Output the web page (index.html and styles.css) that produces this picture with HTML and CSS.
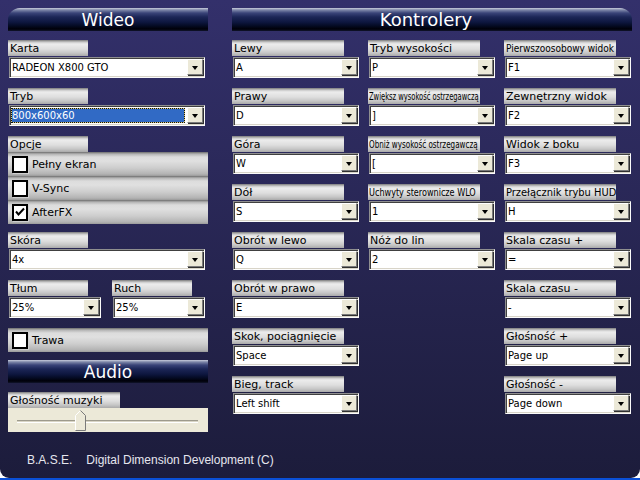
FILE: index.html
```html
<!DOCTYPE html>
<html>
<head>
<meta charset="utf-8">
<link rel="stylesheet" href="styles.css">
</head>
<body>
<div class="window">
  <div class="main">
    <section class="left">
      <h2 class="bar bar-left">Wideo</h2>
      <div class="field">
        <div class="lbl">Karta</div>
        <div class="sel wide"><span class="val">RADEON X800 GTO</span><span class="btn"></span></div>
      </div>
      <div class="field">
        <div class="lbl">Tryb</div>
        <div class="sel wide"><span class="val focus">800x600x60</span><span class="btn"></span></div>
      </div>
      <div class="group">
        <div class="lbl">Opcje</div>
        <div class="chk"><span class="box"></span>Pełny ekran</div>
        <div class="chk"><span class="box"></span>V-Sync</div>
        <div class="chk"><span class="box"><svg width="12" height="12" viewBox="0 0 12 12"><path d="M2 5.5 L4.5 8.5 L10 2.5" fill="none" stroke="#000" stroke-width="2"/></svg></span>AfterFX</div>
      </div>
      <div class="field">
        <div class="lbl">Skóra</div>
        <div class="sel wide"><span class="val">4x</span><span class="btn"></span></div>
      </div>
      <div class="pair">
        <div class="field">
          <div class="lbl">Tłum</div>
          <div class="sel half"><span class="val">25%</span><span class="btn"></span></div>
        </div>
        <div class="field">
          <div class="lbl">Ruch</div>
          <div class="sel half"><span class="val">25%</span><span class="btn"></span></div>
        </div>
      </div>
      <div class="chk single"><span class="box"></span>Trawa</div>
      <h2 class="bar bar-audio">Audio</h2>
      <div class="field last">
        <div class="lbl long">Głośność muzyki</div>
        <div class="slider">
          <div class="groove"></div>
          <svg class="thumb" width="11" height="21" viewBox="0 0 11 21">
            <path d="M0.5 20.5 V5.5 L5.5 0.5 L10.5 5.5 V20.5 Z" fill="#ece9d8"/>
            <path d="M0.5 20 V5.5 L5.5 0.5" fill="none" stroke="#fff"/>
            <path d="M5.5 0.5 L10.5 5.5 V20.5 H0.5" fill="none" stroke="#7a7a7a"/>
          </svg>
        </div>
      </div>
    </section>
    <section class="right">
      <h2 class="bar bar-right">Kontrolery</h2>
      <div class="cols">
        <div class="col">
          <div class="field"><div class="lbl">Lewy</div><div class="sel"><span class="val">A</span><span class="btn"></span></div></div>
          <div class="field"><div class="lbl">Prawy</div><div class="sel"><span class="val">D</span><span class="btn"></span></div></div>
          <div class="field"><div class="lbl">Góra</div><div class="sel"><span class="val">W</span><span class="btn"></span></div></div>
          <div class="field"><div class="lbl">Dół</div><div class="sel"><span class="val">S</span><span class="btn"></span></div></div>
          <div class="field"><div class="lbl">Obrót w lewo</div><div class="sel"><span class="val">Q</span><span class="btn"></span></div></div>
          <div class="field"><div class="lbl">Obrót w prawo</div><div class="sel"><span class="val">E</span><span class="btn"></span></div></div>
          <div class="field"><div class="lbl">Skok, pociągnięcie</div><div class="sel"><span class="val">Space</span><span class="btn"></span></div></div>
          <div class="field"><div class="lbl">Bieg, track</div><div class="sel"><span class="val">Left shift</span><span class="btn"></span></div></div>
        </div>
        <div class="col">
          <div class="field"><div class="lbl">Tryb wysokości</div><div class="sel"><span class="val">P</span><span class="btn"></span></div></div>
          <div class="field"><div class="lbl tiny"><span class="sq sq-a">Zwiększ wysokość ostrzegawczą</span></div><div class="sel"><span class="val">]</span><span class="btn"></span></div></div>
          <div class="field"><div class="lbl tiny"><span class="sq sq-b">Obniż wysokość ostrzegawczą</span></div><div class="sel"><span class="val">[</span><span class="btn"></span></div></div>
          <div class="field"><div class="lbl tiny"><span class="sq sq-c">Uchwyty sterownicze WLO</span></div><div class="sel"><span class="val">1</span><span class="btn"></span></div></div>
          <div class="field"><div class="lbl">Nóż do lin</div><div class="sel"><span class="val">2</span><span class="btn"></span></div></div>
        </div>
        <div class="col">
          <div class="field"><div class="lbl narrow"><span class="sq sq-d">Pierwszoosobowy widok</span></div><div class="sel"><span class="val">F1</span><span class="btn"></span></div></div>
          <div class="field"><div class="lbl">Zewnętrzny widok</div><div class="sel"><span class="val">F2</span><span class="btn"></span></div></div>
          <div class="field"><div class="lbl">Widok z boku</div><div class="sel"><span class="val">F3</span><span class="btn"></span></div></div>
          <div class="field"><div class="lbl cond">Przełącznik trybu HUD</div><div class="sel"><span class="val">H</span><span class="btn"></span></div></div>
          <div class="field"><div class="lbl">Skala czasu +</div><div class="sel"><span class="val">=</span><span class="btn"></span></div></div>
          <div class="field"><div class="lbl">Skala czasu -</div><div class="sel"><span class="val">-</span><span class="btn"></span></div></div>
          <div class="field"><div class="lbl">Głośność +</div><div class="sel"><span class="val">Page up</span><span class="btn"></span></div></div>
          <div class="field"><div class="lbl">Głośność -</div><div class="sel"><span class="val">Page down</span><span class="btn"></span></div></div>
        </div>
      </div>
    </section>
  </div>
  <footer class="footer"><span>B.A.S.E.</span><span>Digital Dimension Development (C)</span></footer>
</div>
<div class="taskbar"></div>
</body>
</html>
```

FILE: styles.css
```css
* { box-sizing: border-box; margin: 0; padding: 0; }
html, body { width: 640px; height: 480px; overflow: hidden; }
body {
  background: #fff;
  font-family: "DejaVu Sans", sans-serif;
  font-size: 11px;
  color: #000;
}
.window {
  width: 640px;
  height: 478px;
  background: linear-gradient(#33306b, #1c1c3b);
  border-radius: 0 0 9px 9px;
  padding: 8px;
  display: flex;
  flex-direction: column;
}
.taskbar { height: 2px; background: #0a4fd6; }
.main { display: flex; gap: 24px; }
.left { width: 200px; display: flex; flex-direction: column; }
.right { width: 400px; }

.bar {
  height: 23px;
  color: #fff;
  font-weight: normal;
  font-size: 17px;
  line-height: 24px;
  text-align: center;
  background: linear-gradient(#c9cddc 0px, #7d86a8 2px, #3a4478 5px, #1c2656 9px, #0e1740 14px, #040a22 18px, #000008 21px, #10142c 23px);
}
.bar-left { border-top-left-radius: 12px; margin-bottom: 9px; }
.bar-right { border-top-right-radius: 12px; margin-bottom: 9px; font-size: 18px; padding-right: 12px; }
.bar-audio { margin-bottom: 9px; }

.field { display: flex; flex-direction: column; }
.left > .field, .left > .group, .left > .pair { margin-bottom: 10px; }
.left > .group { margin-bottom: 8px; }
.left > .chk.single { margin-bottom: 8px; }
.left > .field.last { margin-bottom: 0; }

.lbl {
  width: 80px;
  height: 16px;
  line-height: 17px;
  padding-left: 2px;
  white-space: nowrap;
  overflow: hidden;
  background: linear-gradient(#7e7e7e 0px, #9c9c9c 1px, #c8c8c8 2px, #ececec 4px, #dedede 9px, #c6c6c6 13px, #a9a9a9 16px);
}
.lbl.long { width: 112px; }
.right .lbl { width: 112px; }
.lbl.tiny, .lbl.narrow { font-family: "DejaVu Sans Condensed", "DejaVu Sans", sans-serif; }
.lbl.tiny { font-size: 10px; padding-left: 1px; }
.lbl.narrow { font-size: 11px; }
.lbl.cond { font-family: "DejaVu Sans Condensed", "DejaVu Sans", sans-serif; font-stretch: condensed; }
.sq { display: inline-block; transform-origin: 0 50%; }
.sq-a { transform: scaleX(0.75); }
.sq-b { transform: scaleX(0.8); }
.sq-c { transform: scaleX(0.9); }
.sq-d { transform: scaleX(0.91); }

.sel {
  width: 126px;
  height: 21px;
  margin: 1px 0 0 1px;
  display: flex;
  align-items: center;
  background: #fff;
  border: 1px solid;
  border-color: #8f8f8f #fbfbfb #fbfbfb #8f8f8f;
  box-shadow: inset 1px 1px 0 #404040, inset -1px -1px 0 #d8d4c8;
  padding: 1px;
}
.sel.wide { width: 196px; }
.sel.half { width: 92px; }
.val {
  flex: 1;
  height: 17px;
  line-height: 17px;
  font-size: 10px;
  padding-left: 1px;
  white-space: nowrap;
  overflow: hidden;
}
.val.focus {
  height: 15px;
  line-height: 13px;
  margin: 0 2px 0 0;
  color: #fff;
  border: 1px dotted #111;
  background: linear-gradient(#316ac5, #316ac5) padding-box, #d8c878 border-box;
  padding-left: 0;
}
.btn {
  width: 16px;
  height: 16px;
  margin-right: 0;
  background: #ece9d8;
  border: 1px solid;
  border-color: #fff #7a7a7a #7a7a7a #fff;
  box-shadow: 1px 1px 0 #303030;
  display: flex;
  align-items: center;
  justify-content: center;
  margin-bottom: 1px;
}
.btn::after {
  content: "";
  border-left: 3.5px solid transparent;
  border-right: 3.5px solid transparent;
  border-top: 4px solid #000;
  margin-top: 1px;
}

.group { display: flex; flex-direction: column; }
.chk {
  width: 200px;
  height: 24px;
  display: flex;
  align-items: center;
  gap: 4px;
  padding-left: 4px;
  font-size: 11px;
  background: linear-gradient(#6e6e6e 0px, #8e8e8e 1px, #b4b4b4 2px, #dcdcdc 5px, #e0e0e0 9px, #cdcdcd 16px, #b3b3b3 22px, #9a9a9a 24px);
}
.box {
  width: 16px;
  height: 17px;
  background: #fff;
  border: 2px solid #000;
  box-shadow: 1px 1px 0 #cfcfcf;
  display: flex;
  align-items: center;
  justify-content: center;
}

.pair { display: flex; gap: 11px; }
.pair .field { width: 93px; }

.slider {
  position: relative;
  width: 200px;
  height: 24px;
  background: #ece9d8;
  padding: 12px 10px 0 9px;
}
.groove {
  height: 3px;
  border-top: 1px solid #9d9a8c;
  border-bottom: 1px solid #fff;
  background: #d8d4c4;
}
.thumb { position: absolute; left: 67px; top: 2px; }

.cols { display: flex; gap: 9px; }
.col { width: 127px; display: flex; flex-direction: column; gap: 10px; }

.footer {
  margin-top: 21px;
  padding-left: 19px;
  font-family: "Liberation Sans", Arial, sans-serif;
  font-size: 12px;
  line-height: 14px;
  color: #e6e6ee;
  display: flex;
  gap: 14px;
}
```
